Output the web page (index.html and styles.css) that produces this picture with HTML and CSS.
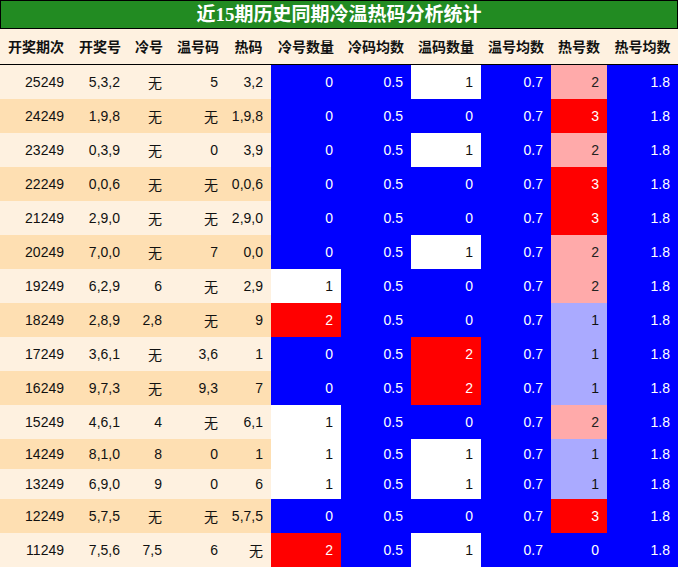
FILE: index.html
```html
<!DOCTYPE html>
<html lang="zh">
<head>
<meta charset="utf-8">
<title>近15期历史同期冷温热码分析统计</title>
<link rel="stylesheet" href="styles.css">
</head>
<body>
<div class="title">近15期历史同期冷温热码分析统计</div>
<table class="stats">
<colgroup>
<col class="c-qi"><col class="c-hao"><col class="c-leng"><col class="c-wen"><col class="c-re">
<col class="c-num"><col class="c-num"><col class="c-num"><col class="c-num"><col class="c-hot"><col class="c-last">
</colgroup>
<thead>
<tr><th>开奖期次</th><th>开奖号</th><th>冷号</th><th>温号码</th><th>热码</th><th>冷号数量</th><th>冷码均数</th><th>温码数量</th><th>温号均数</th><th>热号数</th><th>热号均数</th></tr>
</thead>
<tbody>
<tr class="odd"><td>25249</td><td>5,3,2</td><td>无</td><td>5</td><td>3,2</td><td class="blue">0</td><td class="blue">0.5</td><td class="white">1</td><td class="blue">0.7</td><td class="pink">2</td><td class="blue">1.8</td></tr>
<tr class="even"><td>24249</td><td>1,9,8</td><td>无</td><td>无</td><td>1,9,8</td><td class="blue">0</td><td class="blue">0.5</td><td class="blue">0</td><td class="blue">0.7</td><td class="red">3</td><td class="blue">1.8</td></tr>
<tr class="odd"><td>23249</td><td>0,3,9</td><td>无</td><td>0</td><td>3,9</td><td class="blue">0</td><td class="blue">0.5</td><td class="white">1</td><td class="blue">0.7</td><td class="pink">2</td><td class="blue">1.8</td></tr>
<tr class="even"><td>22249</td><td>0,0,6</td><td>无</td><td>无</td><td>0,0,6</td><td class="blue">0</td><td class="blue">0.5</td><td class="blue">0</td><td class="blue">0.7</td><td class="red">3</td><td class="blue">1.8</td></tr>
<tr class="odd"><td>21249</td><td>2,9,0</td><td>无</td><td>无</td><td>2,9,0</td><td class="blue">0</td><td class="blue">0.5</td><td class="blue">0</td><td class="blue">0.7</td><td class="red">3</td><td class="blue">1.8</td></tr>
<tr class="even"><td>20249</td><td>7,0,0</td><td>无</td><td>7</td><td>0,0</td><td class="blue">0</td><td class="blue">0.5</td><td class="white">1</td><td class="blue">0.7</td><td class="pink">2</td><td class="blue">1.8</td></tr>
<tr class="odd"><td>19249</td><td>6,2,9</td><td>6</td><td>无</td><td>2,9</td><td class="white">1</td><td class="blue">0.5</td><td class="blue">0</td><td class="blue">0.7</td><td class="pink">2</td><td class="blue">1.8</td></tr>
<tr class="even"><td>18249</td><td>2,8,9</td><td>2,8</td><td>无</td><td>9</td><td class="red">2</td><td class="blue">0.5</td><td class="blue">0</td><td class="blue">0.7</td><td class="lav">1</td><td class="blue">1.8</td></tr>
<tr class="odd"><td>17249</td><td>3,6,1</td><td>无</td><td>3,6</td><td>1</td><td class="blue">0</td><td class="blue">0.5</td><td class="red">2</td><td class="blue">0.7</td><td class="lav">1</td><td class="blue">1.8</td></tr>
<tr class="even"><td>16249</td><td>9,7,3</td><td>无</td><td>9,3</td><td>7</td><td class="blue">0</td><td class="blue">0.5</td><td class="red">2</td><td class="blue">0.7</td><td class="lav">1</td><td class="blue">1.8</td></tr>
<tr class="odd"><td>15249</td><td>4,6,1</td><td>4</td><td>无</td><td>6,1</td><td class="white">1</td><td class="blue">0.5</td><td class="blue">0</td><td class="blue">0.7</td><td class="pink">2</td><td class="blue">1.8</td></tr>
<tr class="even"><td>14249</td><td>8,1,0</td><td>8</td><td>0</td><td>1</td><td class="white">1</td><td class="blue">0.5</td><td class="white">1</td><td class="blue">0.7</td><td class="lav">1</td><td class="blue">1.8</td></tr>
<tr class="odd"><td>13249</td><td>6,9,0</td><td>9</td><td>0</td><td>6</td><td class="white">1</td><td class="blue">0.5</td><td class="white">1</td><td class="blue">0.7</td><td class="lav">1</td><td class="blue">1.8</td></tr>
<tr class="even"><td>12249</td><td>5,7,5</td><td>无</td><td>无</td><td>5,7,5</td><td class="blue">0</td><td class="blue">0.5</td><td class="blue">0</td><td class="blue">0.7</td><td class="red">3</td><td class="blue">1.8</td></tr>
<tr class="odd"><td>11249</td><td>7,5,6</td><td>7,5</td><td>6</td><td>无</td><td class="red">2</td><td class="blue">0.5</td><td class="white">1</td><td class="blue">0.7</td><td class="blue">0</td><td class="blue">1.8</td></tr>
</tbody>
</table>
</body>
</html>
```
FILE: styles.css
```css
html, body {
  margin: 0;
  padding: 0;
  background: #ffffff;
}
body {
  width: 678px;
}
.title {
  box-sizing: border-box;
  height: 29px;
  border: 1px solid #000;
  background: #228b22;
  color: #fff;
  font-family: "Liberation Serif", "Noto Sans CJK SC", serif;
  font-weight: bold;
  font-size: 19px;
  line-height: 27px;
  text-align: center;
}
.stats {
  width: 678px;
  table-layout: fixed;
  border-collapse: collapse;
  border-spacing: 0;
  font-family: "Liberation Sans", "Noto Sans CJK SC", sans-serif;
  font-size: 14px;
}
.c-qi { width: 72px; }
.c-hao { width: 56px; }
.c-leng { width: 42px; }
.c-wen { width: 56px; }
.c-re { width: 45px; }
.c-num { width: 70px; }
.c-hot { width: 56px; }
.c-last { width: 71px; }
.stats th {
  background: #fef1e0;
  color: #111;
  font-family: "Noto Sans CJK SC", sans-serif;
  font-weight: bold;
  font-size: 14px;
  line-height: 20px;
  padding: 7px 0 8px;
  text-align: center;
  border-bottom: 1px solid #000;
  white-space: nowrap;
}
.stats td {
  padding: 7px 8px 7px 0;
  text-align: right;
  color: #111;
  white-space: nowrap;
}
.odd td { background: #fef1e0; }
.even td { background: #fedfb2; }
.stats td.blue { background: #0000ff; color: #fff; }
.stats td.white { background: #ffffff; color: #111; }
.stats td.red { background: #ff0000; color: #fff; }
.stats td.pink { background: #ffaaaa; color: #222; }
.stats td.lav { background: #aaaaff; color: #111; }
```
